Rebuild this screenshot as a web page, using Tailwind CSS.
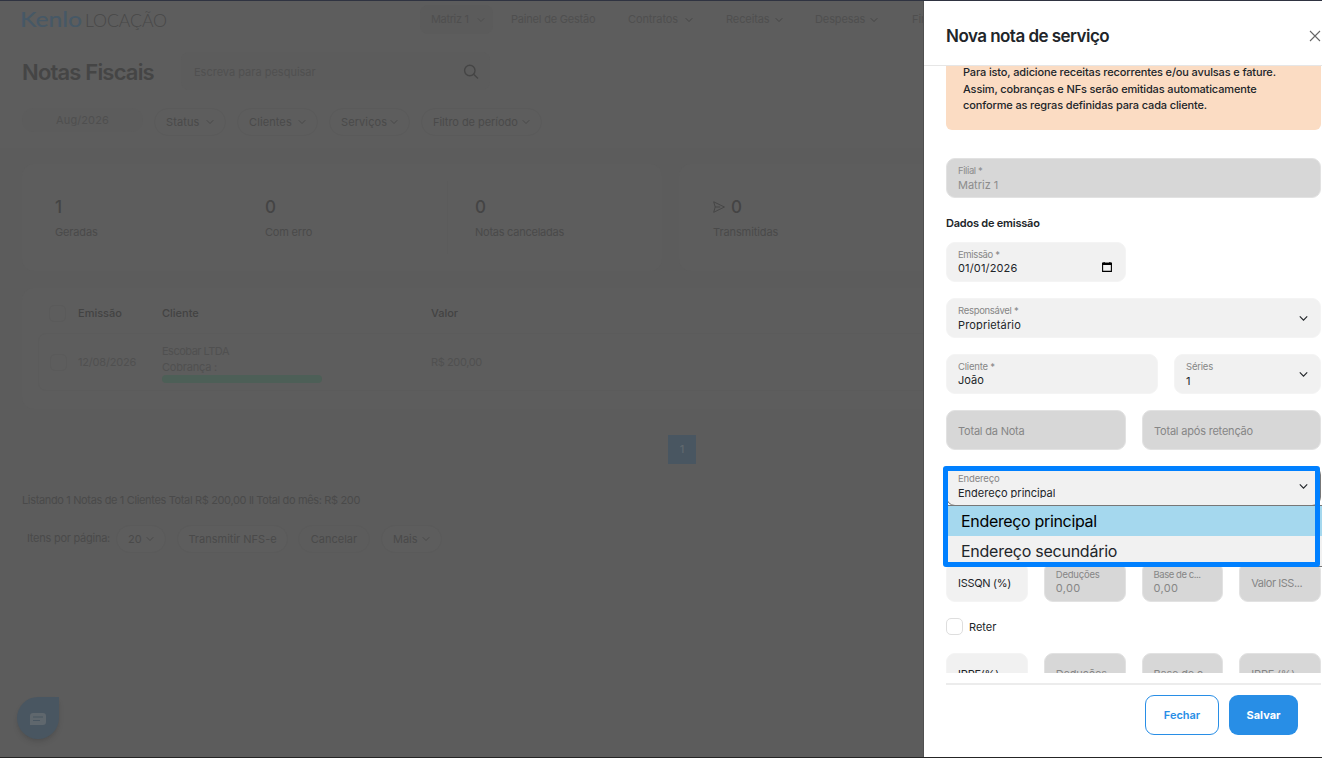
<!DOCTYPE html>
<html lang="pt-BR">
<head>
    <meta charset="UTF-8">
    <meta name="viewport" content="width=device-width, initial-scale=1.0">
    <title>Notas Fiscais</title>
    <script src="https://cdn.jsdelivr.net/npm/@tailwindcss/browser@4"></script>
</head>
<body class="h-screen overflow-hidden bg-[#5d5d5d] font-['Inter',sans-serif] text-[11px] text-[#4a4a4a]">

    <svg class="hidden">
        <symbol id="chevron" viewBox="0 0 8 6"><path d="M.7 1.2l3.3 3.3 3.3-3.3" fill="none" stroke="currentColor" stroke-width="1"/></symbol>
    </svg>

    <div class="flex h-[758px] w-[1322px] border-t border-b border-t-[#2f3341] border-b-[#252525]">

        <!-- Page behind the drawer -->
        <div class="flex w-[924px] shrink-0 flex-col overflow-hidden border-r border-[#505050] whitespace-nowrap">

            <!-- Navbar -->
            <nav class="flex h-[37px] shrink-0 items-center pl-[21px] tracking-[-0.1px] text-[#4f4f4f]">
                <div class="flex w-[399px] shrink-0 items-center">
                    <svg class="h-[26px] w-[147px]" viewBox="0 0 147 26">
                        <text x="-1" y="20" textLength="62" lengthAdjust="spacingAndGlyphs" class="fill-[#465866] font-['Lato',sans-serif] text-[22px] font-medium">Kenlo</text>
                        <text x="64" y="20" textLength="82" lengthAdjust="spacingAndGlyphs" class="fill-[#484848] font-['Lato',sans-serif] text-[17px] font-light">LOCAÇÃO</text>
                    </svg>
                </div>
                <div class="flex h-[29px] w-[73px] shrink-0 items-center justify-between rounded-lg bg-[#5b5b5b] pr-2 pl-[11px]"><span class="tracking-[-0.35px]">Matriz 1</span><svg class="h-[6px] w-2"><use href="#chevron"/></svg></div>
                <span class="ml-[18px] w-[117px] shrink-0 tracking-[-0.2px]">Painel de Gestão</span>
                <div class="flex w-[98px] shrink-0 items-center gap-[7px]"><span>Contratos</span><svg class="h-[6px] w-2 text-[#464646]"><use href="#chevron"/></svg></div>
                <div class="flex w-[89px] shrink-0 items-center gap-[5px]"><span>Receitas</span><svg class="h-[6px] w-2 text-[#464646]"><use href="#chevron"/></svg></div>
                <div class="flex w-[97px] shrink-0 items-center gap-[5px]"><span>Despesas</span><svg class="h-[6px] w-2 text-[#464646]"><use href="#chevron"/></svg></div>
                <span>Fin</span>
            </nav>

            <!-- Title and search -->
            <div class="mt-[14px] flex h-[38px] shrink-0 items-center pl-[22px]">
                <h1 class="w-[159px] pt-[2px] text-[22px] font-semibold tracking-[-0.82px] text-[#454545]">Notas Fiscais</h1>
                <div class="flex h-[38px] w-[309px] items-center justify-between rounded-lg bg-[#5c5c5c] pr-[11px] pl-[13px] text-[#505050]">
                    <span class="pt-[2px]">Escreva para pesquisar</span>
                    <svg class="mt-[1px] size-4 text-[#454545]" viewBox="0 0 16 16" fill="none" stroke="currentColor" stroke-width="1.4"><circle cx="6.8" cy="6.5" r="5.2"/><path d="M10.6 10.3l4.4 4.2"/></svg>
                </div>
            </div>

            <!-- Filters -->
            <div class="mt-[18px] flex h-[28px] shrink-0 gap-[11px] pl-[22px] tracking-[0.1px]">
                <div class="flex h-[24px] w-[121px] items-center justify-center rounded-full bg-[#5c5c5c] text-[#4f4f4f]">Aug/2026</div>
                <div class="flex w-[72px] items-center justify-between rounded-full border border-[#5a5a5a] px-[11px]"><span>Status</span><svg class="h-[6px] w-2"><use href="#chevron"/></svg></div>
                <div class="flex w-[81px] items-center justify-between rounded-full border border-[#5a5a5a] px-[11px]"><span>Clientes</span><svg class="h-[6px] w-2"><use href="#chevron"/></svg></div>
                <div class="flex w-[81px] items-center justify-between rounded-full border border-[#5a5a5a] px-[11px]"><span>Serviços</span><svg class="h-[6px] w-2"><use href="#chevron"/></svg></div>
                <div class="flex w-[121px] items-center justify-between rounded-full border border-[#5a5a5a] px-[11px]"><span class="tracking-[-0.05px]">Filtro de período</span><svg class="h-[6px] w-2"><use href="#chevron"/></svg></div>
            </div>

            <div class="mt-[12px] flex grow flex-col bg-[#5c5c5c] pt-[16px] pl-[22px]">

                <!-- Counters -->
                <div class="flex h-[107px] shrink-0 gap-[17px]">
                    <div class="flex w-[640px] shrink-0 rounded-xl bg-[#5d5d5d] py-[17px] pl-[33px]">
                        <div class="w-[210px] pt-[14px]"><p class="text-[17px] leading-6 font-medium text-[#444]">1</p><p class="mt-[5px] leading-4 tracking-[-0.15px]">Geradas</p></div>
                        <div class="w-[182px] pt-[14px]"><p class="text-[17px] leading-6 font-medium text-[#444]">0</p><p class="mt-[5px] leading-4 tracking-[-0.2px]">Com erro</p></div>
                        <div class="border-l border-[#5b5b5b] pt-[14px] pl-[27px]"><p class="text-[17px] leading-6 font-medium text-[#444]">0</p><p class="mt-[5px] leading-4 tracking-[-0.25px]">Notas canceladas</p></div>
                    </div>
                    <div class="flex w-[400px] shrink-0 rounded-xl bg-[#5d5d5d] py-[17px] pl-[34px]">
                        <div class="w-[215px] border-r border-[#5b5b5b] pt-[14px]">
                            <div class="flex items-center gap-[6px] text-[17px] leading-6 font-medium text-[#444]">
                                <svg class="h-[12px] w-[12px]" viewBox="0 0 12 12" fill="none" stroke="currentColor" stroke-width="0.9"><path d="M.7.8l10.7 5.2L.7 11.3 2.2 6zM2.2 6h5"/></svg>0
                            </div>
                            <p class="mt-[5px] leading-4 tracking-[-0.1px]">Transmitidas</p>
                        </div>
                    </div>
                </div>

                <!-- Table -->
                <div class="mt-[17px] h-[121px] w-[1000px] shrink-0 rounded-xl bg-[#5d5d5d] pt-[5px] pl-[16px]">
                    <div class="flex h-[40px] items-center pl-[11px] font-medium text-[#434343]">
                        <span class="mr-[12px] size-[17px] rounded-[5px] border border-[#5a5a5a]"></span>
                        <span class="w-[84px]">Emissão</span>
                        <span class="w-[269px]">Cliente</span>
                        <span>Valor</span>
                    </div>
                    <div class="flex h-[58px] items-center rounded-lg border border-[#5b5b5b] pl-[11px] tracking-[-0.2px] text-[#505050]">
                        <span class="mr-[11px] size-[17px] rounded-[5px] border border-[#5a5a5a]"></span>
                        <span class="w-[84px]">12/08/2026</span>
                        <div class="w-[269px] pt-[2px] leading-4">
                            <p class="tracking-[-0.5px]">Escobar LTDA</p>
                            <p>Cobrança :</p>
                            <div class="h-[8px] w-[160px] rounded-full bg-[#4d5f57]"></div>
                        </div>
                        <span class="tracking-[-0.4px]">R$ 200,00</span>
                    </div>
                </div>

                <!-- Pagination -->
                <div class="mt-[26px] ml-[646px] flex h-[29px] w-[28px] shrink-0 items-center justify-center bg-[#495661] font-medium text-[#60686e]">1</div>
                <p class="mt-[28px] leading-4 tracking-[-0.35px]">Listando 1 Notas de 1 Clientes Total R$ 200,00 ll Total do mês: R$ 200</p>

                <div class="mt-[17px] flex h-[28px] shrink-0">
                    <span class="w-[94px] pt-[5px] pl-[5px] leading-4 tracking-[-0.25px]">Itens por página:</span>
                    <div class="flex w-[50px] items-center justify-between rounded-full border border-[#5a5a5a] bg-[#5d5d5d] px-[11px]"><span>20</span><svg class="h-[6px] w-2"><use href="#chevron"/></svg></div>
                    <div class="ml-[11px] flex w-[111px] items-center justify-center rounded-full border border-[#5a5a5a] bg-[#5d5d5d]">Transmitir NFS-e</div>
                    <div class="ml-[10px] flex w-[72px] items-center justify-center rounded-full border border-[#5a5a5a]">Cancelar</div>
                    <div class="ml-[11px] flex w-[61px] items-center justify-between rounded-full border border-[#5a5a5a] bg-[#5d5d5d] px-[11px]"><span>Mais</span><svg class="h-[6px] w-2"><use href="#chevron"/></svg></div>
                </div>
            </div>
        </div>

        <!-- Drawer -->
        <aside class="flex w-[398px] shrink-0 flex-col bg-white text-[#212529]">
            <header class="flex h-[65px] shrink-0 items-center justify-between border-b border-[#e6e6e6] pt-[6px] pr-[1px] pl-[22px]">
                <h2 class="pt-[2px] text-[17px] font-semibold tracking-[-0.53px]">Nova nota de serviço</h2>
                <svg class="size-3" viewBox="0 0 12 12" stroke="#666" stroke-width="1.1"><path d="M1 1l10 10M11 1L1 11"/></svg>
            </header>

            <div class="relative h-[607px] shrink-0 overflow-hidden pr-[1px] pl-[22px]">
                <div class="mt-[-18px] h-[82px] rounded-md bg-[#fbdcc3] pt-[16px] pl-[17px] text-[11px] leading-[16.5px] font-medium tracking-[-0.14px] whitespace-nowrap">
                    <p>Para isto, adicione receitas recorrentes e/ou avulsas e fature.</p>
                    <p>Assim, cobranças e NFs serão emitidas automaticamente</p>
                    <p>conforme as regras definidas para cada cliente.</p>
                </div>

                <div class="mt-[28px] h-[40px] rounded-[9px] border border-[#e2e2e2] bg-[#d7d7d7] px-[11px] pt-[5px] text-[#8c8c8c]">
                    <p class="text-[9.5px] leading-[14px] tracking-[-0.4px]">Filial *</p>
                    <p class="leading-[14px]">Matriz 1</p>
                </div>

                <h3 class="mt-[17px] leading-4 font-semibold tracking-[-0.22px]">Dados de emissão</h3>

                <div class="mt-[11px] flex h-[40px] w-[180px] items-center justify-between rounded-[9px] border border-[#f4f4f4] bg-[#f1f1f1] pr-[13px] pl-[11px]">
                    <div class="pb-[2px]">
                        <p class="text-[9.5px] leading-[14px] tracking-[-0.35px] text-[#868686]">Emissão *</p>
                        <p class="leading-[13px] tracking-[0.15px]">01/01/2026</p>
                    </div>
                    <svg class="mt-[9px] h-[10px] w-[10px]" viewBox="0 0 10 10"><path d="M.6 1.2h8.8v8.2H.6z" fill="none" stroke="#000" stroke-width="1.1"/><path d="M0 .7h10v2.2H0zM1.5 0h1.2v1H1.5zM7.3 0h1.2v1H7.3z"/></svg>
                </div>

                <div class="mt-[16px] flex h-[40px] items-center justify-between rounded-[9px] border border-[#f4f4f4] bg-[#f1f1f1] pr-[12px] pl-[11px]">
                    <div class="pb-[2px]">
                        <p class="text-[9.5px] leading-[14px] tracking-[-0.3px] text-[#868686]">Responsável *</p>
                        <p class="h-[12px] overflow-hidden leading-[15px] tracking-[0.15px]">Proprietário</p>
                    </div>
                    <svg class="h-[7px] w-[9px]"><use href="#chevron"/></svg>
                </div>

                <div class="mt-[16px] flex gap-[16px]">
                    <div class="h-[40px] w-[212px] rounded-[9px] border border-[#f4f4f4] bg-[#f1f1f1] px-[11px] pt-[5px]">
                        <p class="text-[9.5px] leading-[14px] tracking-[-0.2px] text-[#868686]">Cliente *</p>
                        <p class="leading-[13px]">João</p>
                    </div>
                    <div class="flex h-[40px] grow items-center justify-between rounded-[9px] border border-[#f4f4f4] bg-[#f1f1f1] pr-[12px] pl-[11px]">
                        <div>
                            <p class="text-[9.5px] leading-[14px] tracking-[-0.2px] text-[#868686]">Séries</p>
                            <p class="leading-[14px]">1</p>
                        </div>
                        <svg class="h-[7px] w-[9px]"><use href="#chevron"/></svg>
                    </div>
                </div>

                <div class="mt-[16px] flex gap-[16px] tracking-[-0.2px] text-[#868686]">
                    <div class="flex h-[40px] w-[180px] items-center rounded-[9px] border border-[#e2e2e2] bg-[#d7d7d7] px-[11px] pt-[2px]">Total da Nota</div>
                    <div class="flex h-[40px] grow items-center rounded-[9px] border border-[#e2e2e2] bg-[#d7d7d7] px-[11px] pt-[2px]">Total após retenção</div>
                </div>

                <div class="mt-[16px] flex h-[40px] items-center justify-between rounded-[9px] border border-[#777] bg-[#f1f1f1] pr-[12px] pl-[11px]">
                    <div class="pb-[2px]">
                        <p class="text-[9.5px] leading-[14px] tracking-[-0.15px] text-[#868686]">Endereço</p>
                        <p class="h-[12px] overflow-hidden leading-[14px]">Endereço principal</p>
                    </div>
                    <svg class="h-[7px] w-[9px]"><use href="#chevron"/></svg>
                </div>

                <div class="mt-[56px] grid grid-cols-4 gap-[16px] text-[#868686]">
                    <div class="flex h-[40px] items-center rounded-[9px] border border-[#f4f4f4] bg-[#f1f1f1] px-[11px] pt-[2px] tracking-[-0.3px] text-[#212529]">ISSQN (%)</div>
                    <div class="h-[40px] rounded-[9px] border border-[#e2e2e2] bg-[#d7d7d7] px-[11px] pt-[5px]">
                        <p class="text-[9.5px] leading-[14px] tracking-[-0.2px]">Deduções</p>
                        <p class="leading-[13px] tracking-[0.3px]">0,00</p>
                    </div>
                    <div class="h-[40px] rounded-[9px] border border-[#e2e2e2] bg-[#d7d7d7] px-[11px] pt-[5px]">
                        <p class="text-[9.5px] leading-[14px] tracking-[-0.45px]">Base de c...</p>
                        <p class="leading-[13px] tracking-[0.3px]">0,00</p>
                    </div>
                    <div class="flex h-[40px] items-center rounded-[9px] border border-[#e2e2e2] bg-[#d7d7d7] px-[11px] pt-[2px] tracking-[-0.45px]">Valor ISS...</div>
                </div>

                <label class="mt-[16px] flex h-[17px] items-center gap-[6px]">
                    <span class="size-[17px] rounded-[5px] border border-[#dedede]"></span>
                    <span class="pt-[2px]">Reter</span>
                </label>

                <div class="mt-[18px] grid grid-cols-4 gap-[16px] tracking-[-0.2px] whitespace-nowrap text-[#868686]">
                    <div class="flex h-[40px] items-center rounded-[9px] border border-[#f4f4f4] bg-[#f1f1f1] px-[11px] pt-[2px] text-[#212529]">IRRF(%)</div>
                    <div class="flex h-[40px] items-center rounded-[9px] border border-[#e2e2e2] bg-[#d7d7d7] px-[11px] pt-[2px]">Deduções</div>
                    <div class="flex h-[40px] items-center rounded-[9px] border border-[#e2e2e2] bg-[#d7d7d7] px-[11px] pt-[2px]">Base de c</div>
                    <div class="flex h-[40px] items-center rounded-[9px] border border-[#e2e2e2] bg-[#d7d7d7] px-[11px] pt-[2px]">IRRF (%)</div>
                </div>

                <!-- Open address options -->
                <ul class="absolute top-[439px] left-[22px] w-[380px] border border-[#777] bg-[#f1f1f1] text-[16px] tracking-[-0.33px] text-black">
                    <li class="h-[30px] bg-[#a5d8ee] pl-[14px] leading-[31px]">Endereço principal</li>
                    <li class="h-[30px] pl-[14px] leading-[31px] tracking-[-0.25px] text-[#212529]">Endereço secundário</li>
                </ul>
                <div class="absolute top-[400px] left-[19px] h-[101px] w-[377px] rounded-[3px] border-5 border-[#0080ff]"></div>
            </div>

            <footer class="mt-[10px] mr-[1px] ml-[22px] flex gap-[11px] border-t-2 border-[#ececec] pt-[10px] pl-[199px] font-bold">
                <button class="h-[40px] w-[74px] rounded-[9px] border-[1.5px] border-[#288ee6] font-semibold text-[#288ee6]">Fechar</button>
                <button class="-ml-px h-[40px] w-[69px] rounded-[9px] bg-[#288ee6] text-white">Salvar</button>
            </footer>
        </aside>
    </div>

    <!-- Chat -->
    <div class="absolute top-[697px] left-[17px] flex size-[42px] items-center justify-center rounded-full rounded-tr-[5px] bg-[#495661] shadow-md">
        <svg class="mt-[2px] h-[12px] w-[16px]" viewBox="0 0 16 12"><path d="M3 0h10a3 3 0 0 1 3 3v6a3 3 0 0 1-3 3H0V3a3 3 0 0 1 3-3z" fill="#5f676d"/><path d="M3 4h10M3 7.5h7" stroke="#495661" stroke-width="1.2"/></svg>
    </div>

</body>
</html>
